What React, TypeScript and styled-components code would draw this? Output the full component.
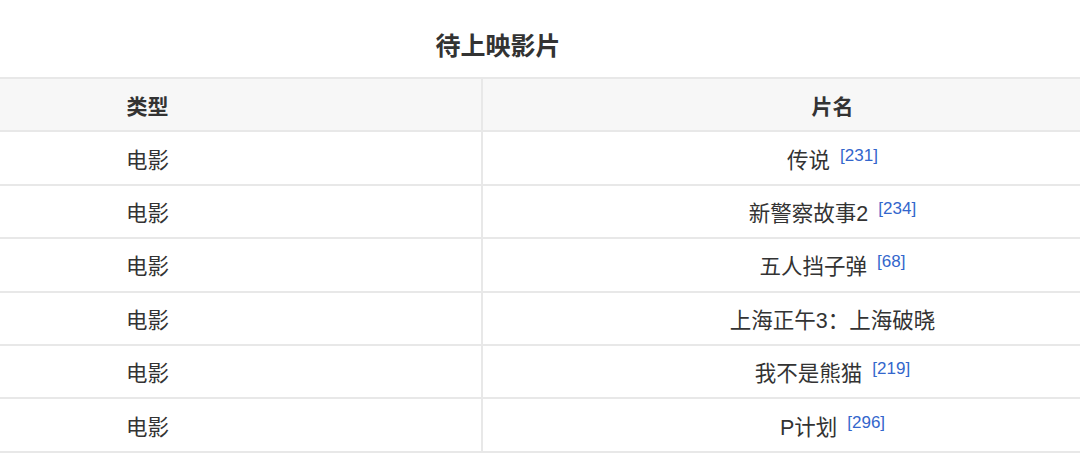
import React from "react";
import styled, { createGlobalStyle } from "styled-components";

const Global = createGlobalStyle`
  html, body {
    margin: 0;
    padding: 0;
    background: #ffffff;
    overflow: hidden;
  }
  body {
    font-family: "Liberation Sans", "Noto Sans CJK SC", sans-serif;
    color: #333333;
  }
`;

const Page = styled.div`
  width: 1080px;
  height: 468px;
  overflow: hidden;
`;

const Table = styled.table`
  border-collapse: collapse;
  width: 1370px;
  margin-left: -188px;
  table-layout: fixed;
  font-size: 21.5px;
`;

const Caption = styled.caption`
  font-size: 25px;
  font-weight: bold;
  line-height: 32px;
  padding: 30px 0 15px;
  color: #333333;
  text-align: center;
`;

const HeadCell = styled.th`
  background: #f7f7f7;
  border: 2px solid #e8e8e8;
  height: 51.4px;
  padding: 0;
  font-size: 21px;
  font-weight: bold;
  text-align: center;
  vertical-align: middle;
`;

const Cell = styled.td`
  border: 2px solid #e8e8e8;
  height: 51.4px;
  padding: 0;
  text-align: center;
  vertical-align: middle;
`;

const Ref = styled.sup`
  font-size: 17px;
  color: #3366cc;
  vertical-align: 7px;
  line-height: 1;
  margin-left: 4px;
`;

const films: { name: string; ref?: string }[] = [
  { name: "传说", ref: "231" },
  { name: "新警察故事2", ref: "234" },
  { name: "五人挡子弹", ref: "68" },
  { name: "上海正午3：上海破晓" },
  { name: "我不是熊猫", ref: "219" },
  { name: "P计划", ref: "296" },
];

export default function App() {
  return (
    <Page>
      <Global />
      <Table>
        <Caption>待上映影片</Caption>
        <colgroup>
          <col style={{ width: "669px" }} />
          <col style={{ width: "701px" }} />
        </colgroup>
        <thead>
          <tr>
            <HeadCell>类型</HeadCell>
            <HeadCell>片名</HeadCell>
          </tr>
        </thead>
        <tbody>
          {films.map((f) => (
            <tr key={f.name}>
              <Cell>电影</Cell>
              <Cell>
                {f.name}
                {f.ref && <>{" "}<Ref>[{f.ref}]</Ref></>}
              </Cell>
            </tr>
          ))}
        </tbody>
      </Table>
    </Page>
  );
}
